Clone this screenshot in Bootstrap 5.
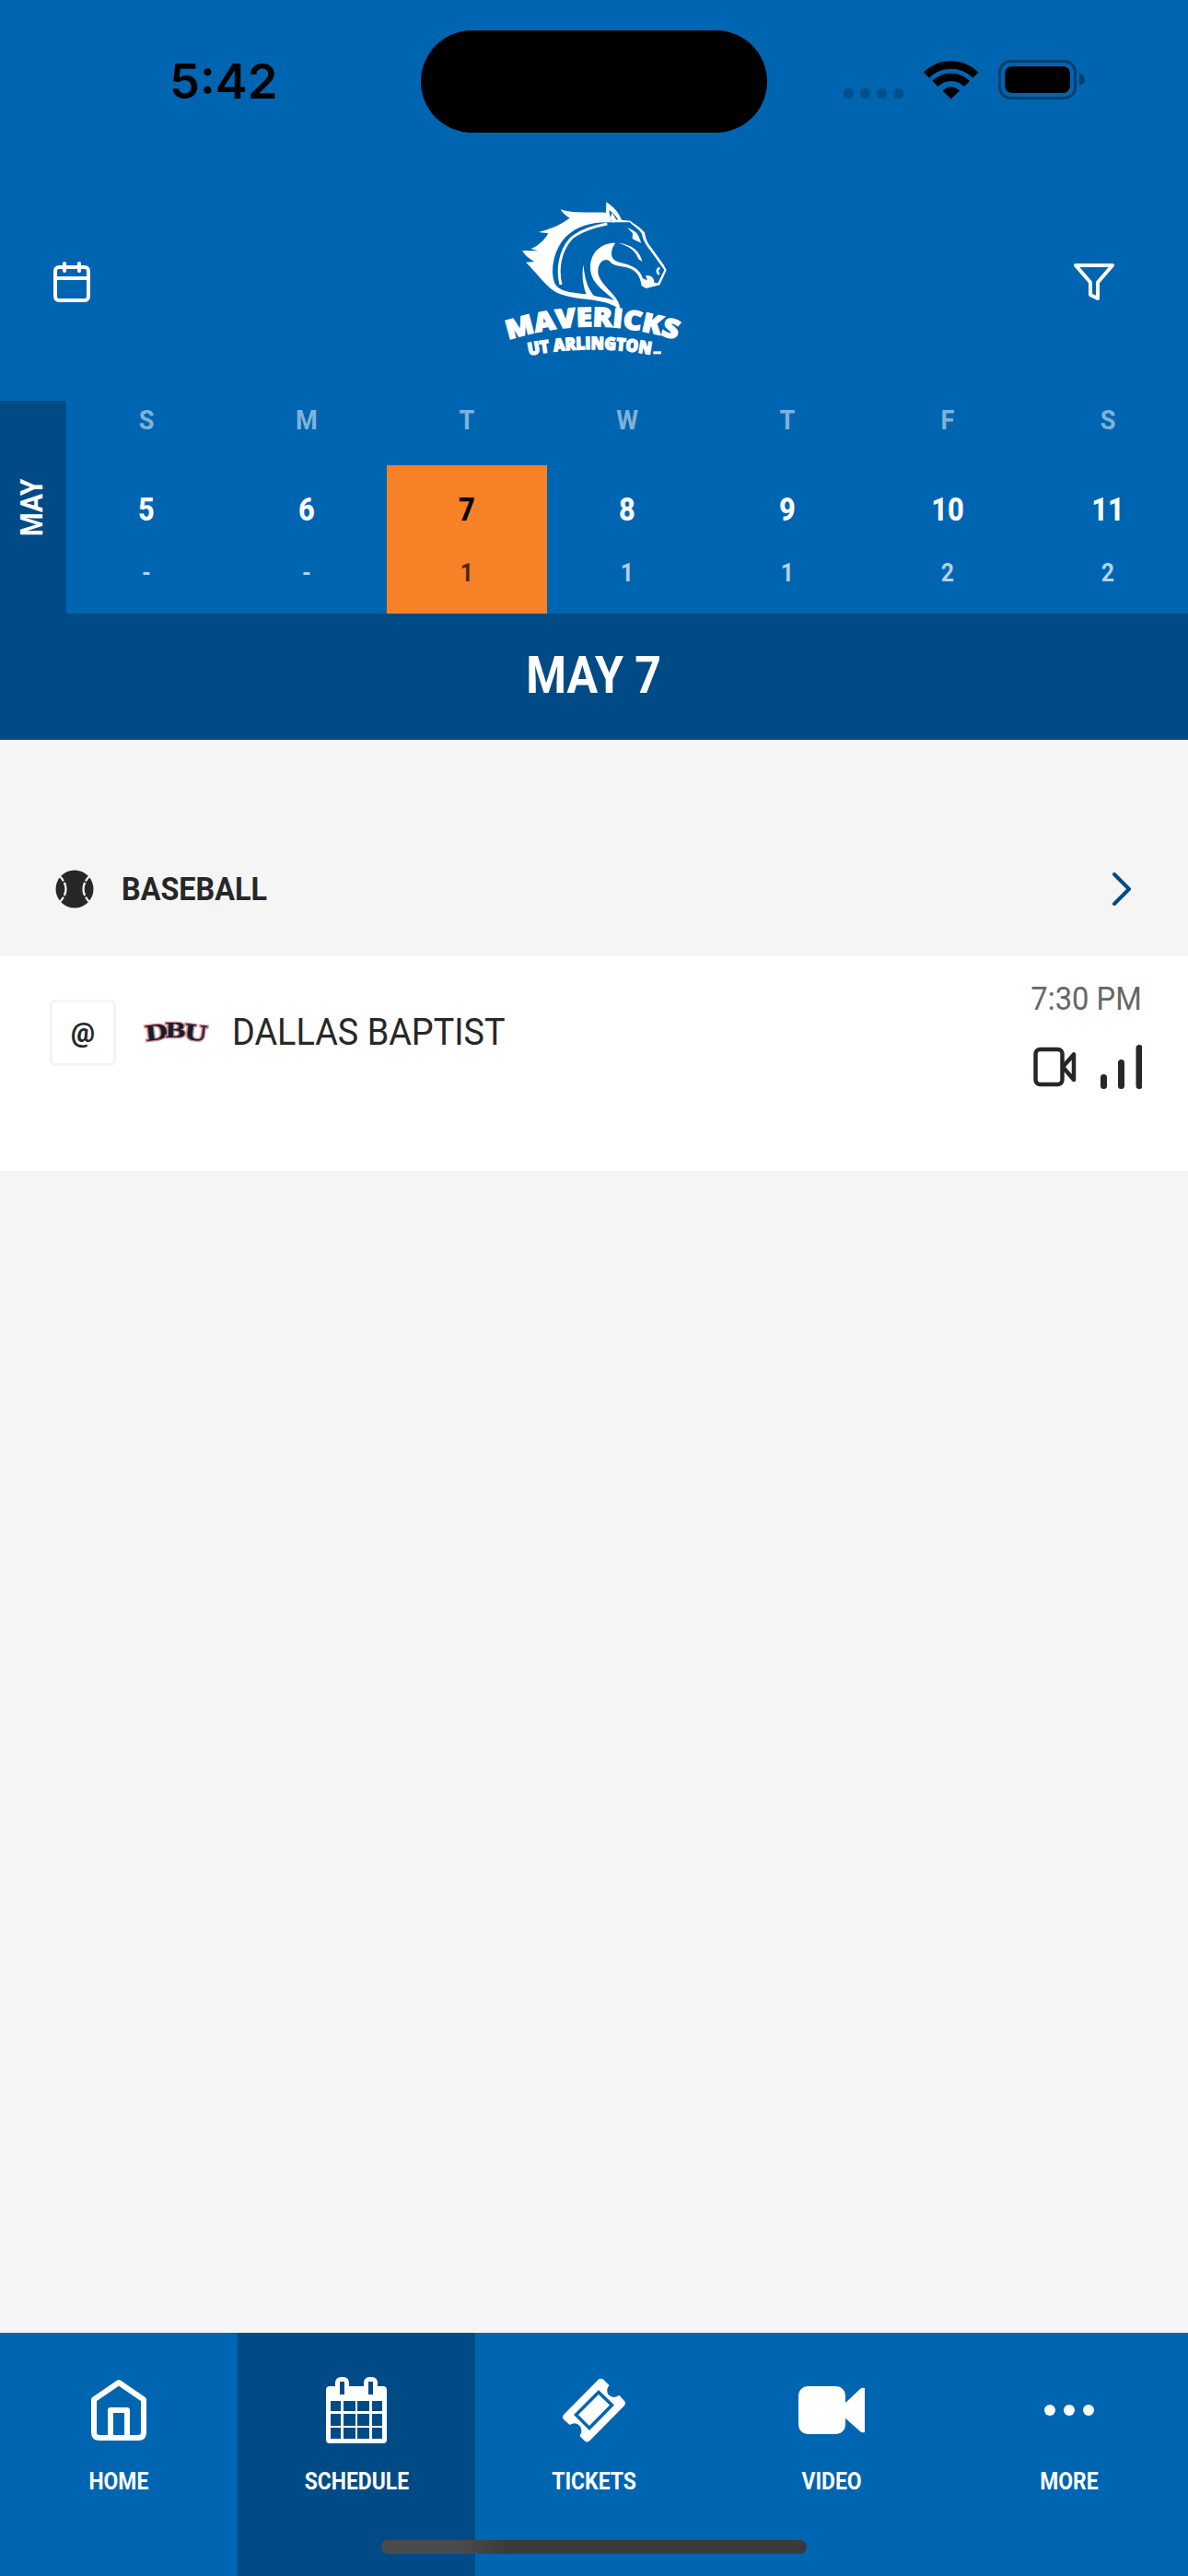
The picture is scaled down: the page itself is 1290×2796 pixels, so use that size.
<!DOCTYPE html>
<html lang="en">
<head>
    <meta charset="UTF-8">
    <meta name="viewport" content="width=device-width, initial-scale=1.0">
    <title>Mavericks Schedule</title>
    <link href="https://cdn.jsdelivr.net/npm/bootstrap@5.3.0/dist/css/bootstrap.min.css" rel="stylesheet">
    <script src="https://cdn.jsdelivr.net/npm/bootstrap@5.3.0/dist/js/bootstrap.bundle.min.js"></script>
    <style>
        :root { --uta-blue: #0065b1; --uta-navy: #004b85; --uta-orange: #f78127; --ink: #262728; }
        body { width: 1290px; height: 2796px; background: #f5f5f5; color: var(--ink); font-family: Roboto, "Liberation Sans", sans-serif; line-height: 1; overflow: hidden; }
        svg { display: block; flex: none; }
        .bg-blue { background: var(--uta-blue); }
        .bg-navy { background: var(--uta-navy); }

        .status-bar { height: 178px; padding: 33px 112px 0 184px; }
        .clock { width: 273px; font-family: Inter, sans-serif; font-size: 52.5px; font-weight: 600; padding-top: 29px; color: #000; }
        .island { width: 376px; height: 111px; }
        .status-icons { margin-top: 31px; }

        .app-header { height: 257px; padding: 22px 80px 0 58px; }
        .cal-icon { margin-top: 84px; }
        .team-logo { margin-left: 422px; }
        .filter-icon { margin-top: 86px; }

        .month-tab { width: 72px; }
        .month-tab span { writing-mode: vertical-rl; transform: rotate(180deg) scaleY(.9); margin-right: 3px; font-size: 33px; font-weight: 700; }
        .week { height: 231px; }
        .day-col { flex: 1 1 0; min-width: 0; }
        .weekday { height: 70px; padding-top: 7px; font-size: 29.5px; font-weight: 700; color: #80b2d8; transform: scaleX(.92); }
        .day-cell { height: 161px; padding-top: 31px; }
        .day-num { font-size: 35px; font-weight: 800; color: #fff; transform: scaleX(.88); }
        .day-count { font-size: 27px; font-weight: 700; color: #b3d1e8; margin-top: 38px; transform: scaleX(.92); }
        .day-cell.selected { background: var(--uta-orange); }
        .selected .day-num { color: #000; }
        .selected .day-count { color: #4a270c; }
        .date-title { height: 137px; font-size: 55px; font-weight: 700; padding-bottom: 3px; }
        .date-title span { transform: scaleX(.91); }

        .sport-head { margin-top: 90px; height: 144px; padding: 0 62px 0 60px; }
        .sport-name { font-size: 35px; font-weight: 700; margin-left: 30px; transform: scaleX(.925); transform-origin: left; }
        .game-row { height: 234px; padding: 0 50px 0 54px; }
        .at-box { width: 72px; height: 72px; margin-top: 48px; border: 3px solid #f4f4f4; border-radius: 6px; font-size: 29px; font-weight: 800; }
        .dbu { margin: 65px 0 0 24px; }
        .opponent { font-size: 41px; margin: 63px 0 0 22px; transform: scaleX(.922); transform-origin: left; }
        .game-time { font-size: 35px; color: #666; margin-top: 30px; transform: scaleX(.935); transform-origin: right; }
        .media-icons { margin-top: 32px; }

        .tab-bar { height: 264px; }
        .tab-item { width: 258px; padding-top: 48px; }
        .tab-label { font-size: 26px; font-weight: 700; margin-top: 28px; transform: scaleX(.88); }
        .home-bar { left: 414px; bottom: 24px; width: 462px; height: 15px; background: linear-gradient(90deg, #4b4b4b 18%, #3a3a3a 30%); }
    </style>
</head>
<body class="d-flex flex-column">

    <!-- Status bar -->
    <div class="status-bar bg-blue d-flex align-items-start">
        <div class="clock">5:42</div>
        <div class="island bg-black rounded-pill"></div>
        <svg class="status-icons ms-auto" width="264" height="44" viewBox="0 0 264 44">
            <g fill="#00508c">
                <rect x="2" y="32" width="11" height="11" rx="4.5"/>
                <rect x="20" y="32" width="11" height="11" rx="4.5"/>
                <rect x="38" y="32" width="11" height="11" rx="4.5"/>
                <rect x="56" y="32" width="11" height="11" rx="4.5"/>
            </g>
            <g fill="none" stroke="#000" stroke-width="8.5">
                <path d="M92 17.500 A38 38 0 0 1 145.500 17.500"/>
                <path d="M101.500 27 A24 24 0 0 1 136 27"/>
            </g>
            <path d="M109.500 34.500 Q118.700 26 128 34.500 L118.700 43.500Z"/>
            <rect x="171.500" y="2.500" width="82" height="40" rx="12" fill="none" stroke="#003f6e" stroke-width="3"/>
            <rect x="177" y="8" width="71" height="29" rx="8"/>
            <path d="M258 15 Q264 18 264 22.500 Q264 27 258 29Z" fill="#003f6e"/>
        </svg>
    </div>

    <!-- Header with team logo -->
    <div class="app-header bg-blue d-flex align-items-start">
        <svg class="cal-icon" width="40" height="44" viewBox="0 0 40 44" fill="none" stroke="#fff" stroke-width="4" stroke-linecap="round">
            <rect x="2" y="6" width="36" height="36" rx="4"/>
            <path d="M12 2V10M28 2V10M2 18H38"/>
        </svg>
        <svg class="team-logo" width="240" height="200" viewBox="0 0 720 600" fill="#fff">
            <path d="M460 412 C445 394 420 382 350 374 C290 368 255 358 232 338 C205 314 180 280 153 254 L181 252 C166 244 150 232 141 216 L193 217 L169 210 C195 201 214 180 226 160 L194 156 C225 148 260 136 296 110 C284 103 272 94 266 82 C310 96 350 90 414 92 L415 58 C440 74 455 92 465 116 L494 119 C510 133 530 143 540 157 C544 180 550 192 560 204 L601 261 L611 279 L602 300 L589 328 L545 339 L530 331 C527 305 515 280 486 272 C465 266 438 268 425 250 C412 240 388 250 388 285 C390 330 466 365 460 412Z"/>
            <!-- blue areas: neck, face and jaw -->
            <path fill="#0065b1" d="M246 320 C232 280 244 220 275 180 C310 140 360 123 424 124 L492 124 C505 138 522 145 531 162 C535 185 548 202 557 214 L604 279 L583 322 L571 320 C572 306 560 294 543 298 L549 313 L534 307 C525 275 500 265 470 257 C445 253 432 244 432 225 C433 205 440 200 445 191 C400 190 364 220 363 270 C363 320 400 340 442 378 C415 368 385 366 374 362 C350 335 345 300 340 262 C334 300 340 335 350 358 C300 352 260 350 246 320Z"/>
            <path fill="#0065b1" d="M424 85 L430 120 L453 115 Q440 94 424 85Z"/>
            <path d="M434 92 L448 116 L438 126 L427 112Z"/>
            <path fill="none" stroke="#fff" stroke-width="9" d="M267 327 C255 280 262 220 300 177 C330 150 370 138 418 129"/>
            <path d="M484 142 Q510 151 519 166 L529 191 Q512 185 500 177 L501 160Z"/>
            <path d="M454 191 Q520 198 532 252 L520 244 Q508 206 454 191Z"/>
            <path fill="none" stroke="#fff" stroke-width="8" d="M589 272 Q575 280 587 294"/>
            <g font-family="Open Sans, sans-serif" font-weight="800" stroke="#fff" stroke-width="4" text-anchor="middle">
                <path id="arc1" fill="none" stroke="none" d="M78 513 Q368 413 662 513"/>
                <path id="arc2" fill="none" stroke="none" d="M150 560 Q368 514 590 560"/>
                <text font-size="86"><textPath href="#arc1" startOffset="50%" textLength="556" lengthAdjust="spacingAndGlyphs">MAVERICKS</textPath></text>
                <text font-size="56"><textPath href="#arc2" startOffset="48%" textLength="400" lengthAdjust="spacingAndGlyphs">UT ARLINGTON</textPath></text>
            </g>
            <path d="M568 544h26v9h-26z"/>
        </svg>
        <svg class="filter-icon ms-auto" width="44" height="40" viewBox="0 0 44 40" fill="none" stroke="#fff" stroke-width="4" stroke-linejoin="round">
            <path d="M2 2H42L26 20.500V38L18 34V20.500Z"/>
        </svg>
    </div>

    <!-- Week strip -->
    <div class="week bg-blue d-flex">
        <div class="month-tab bg-navy text-white d-flex align-items-center justify-content-center"><span>MAY</span></div>
        <div class="day-col text-center">
            <div class="weekday">S</div>
            <div class="day-cell"><div class="day-num">5</div><div class="day-count">-</div></div>
        </div>
        <div class="day-col text-center">
            <div class="weekday">M</div>
            <div class="day-cell"><div class="day-num">6</div><div class="day-count">-</div></div>
        </div>
        <div class="day-col text-center">
            <div class="weekday">T</div>
            <div class="day-cell selected"><div class="day-num">7</div><div class="day-count">1</div></div>
        </div>
        <div class="day-col text-center">
            <div class="weekday">W</div>
            <div class="day-cell"><div class="day-num">8</div><div class="day-count">1</div></div>
        </div>
        <div class="day-col text-center">
            <div class="weekday">T</div>
            <div class="day-cell"><div class="day-num">9</div><div class="day-count">1</div></div>
        </div>
        <div class="day-col text-center">
            <div class="weekday">F</div>
            <div class="day-cell"><div class="day-num">10</div><div class="day-count">2</div></div>
        </div>
        <div class="day-col text-center">
            <div class="weekday">S</div>
            <div class="day-cell"><div class="day-num">11</div><div class="day-count">2</div></div>
        </div>
    </div>
    <div class="date-title bg-navy text-white d-flex align-items-center justify-content-center"><span>MAY 7</span></div>

    <!-- Games -->
    <div class="sport-head d-flex align-items-center">
        <svg width="42" height="42" viewBox="0 0 42 42">
            <circle cx="21" cy="21" r="20.500" fill="#262728"/>
            <g fill="none" stroke="#f4f4f4" stroke-width="2.200">
                <path d="M5 7Q18 21 5 35M37 7Q24 21 37 35"/>
                <path d="M8 14L13 11M8 28L13 31M34 14L29 11M34 28L29 31" stroke="#262728" stroke-width="2"/>
            </g>
        </svg>
        <div class="sport-name">BASEBALL</div>
        <svg class="ms-auto" width="20" height="36" viewBox="0 0 20 36" fill="none" stroke="#004b85" stroke-width="4" stroke-linecap="round" stroke-linejoin="round">
            <path d="M2 2L18 18L2 34"/>
        </svg>
    </div>
    <div class="game-row bg-white d-flex align-items-start">
        <div class="at-box d-flex align-items-center justify-content-center">@</div>
        <svg class="dbu" width="80" height="36" viewBox="0 0 80 36" font-family="DejaVu Serif, serif" font-weight="700" fill="#10202f" stroke="#d9898c" stroke-width="2.500" paint-order="stroke">
            <text x="7" y="27" font-size="23" textLength="25" lengthAdjust="spacingAndGlyphs" transform="rotate(-7 18 18)">D</text>
            <text x="29" y="24" font-size="22" textLength="23" lengthAdjust="spacingAndGlyphs">B</text>
            <text x="50" y="27" font-size="23" textLength="25" lengthAdjust="spacingAndGlyphs" transform="rotate(7 62 18)">U</text>
        </svg>
        <div class="opponent">DALLAS BAPTIST</div>
        <div class="ms-auto d-flex flex-column align-items-end">
            <div class="game-time">7:30 PM</div>
            <svg class="media-icons" width="118" height="48" viewBox="0 0 118 48">
                <g fill="none" stroke="#262728" stroke-width="4.500" stroke-linejoin="round">
                    <rect x="2.500" y="5" width="29" height="38" rx="5"/>
                    <path d="M32 24L44 10.500V38Z"/>
                </g>
                <path d="M76.500 35.500V44.500M95.500 19.500V44.500M115 3.500V44.500" fill="none" stroke="#262728" stroke-width="7" stroke-linecap="round"/>
            </svg>
        </div>
    </div>

    <!-- Bottom tabs -->
    <div class="tab-bar bg-blue text-white d-flex mt-auto position-relative">
        <div class="tab-item d-flex flex-column align-items-center">
            <svg width="60" height="72" viewBox="0 0 60 72" fill="none" stroke="#fff" stroke-width="6" stroke-linejoin="round">
                <path d="M3 24.500L30 6L57 24.500V60Q57 66 51 66H9Q3 66 3 60Z"/>
                <path d="M21 66V36H39V66"/>
            </svg>
            <div class="tab-label">HOME</div>
        </div>
        <div class="tab-item bg-navy d-flex flex-column align-items-center">
            <svg width="66" height="72" viewBox="0 0 66 72">
                <rect y="10" width="66" height="62" rx="4" fill="#fff"/>
                <rect x="10" width="15" height="22" rx="6" fill="#fff"/>
                <rect x="41" width="15" height="22" rx="6" fill="#fff"/>
                <path fill="#004b85" d="M15 5h5v14h-5zM46 5h5v14h-5zM5 26h11v11H5zM19 26h13v11H19zM34 26h13v11H34zM50 26h11v11H50zM5 40h11v13H5zM19 40h13v13H19zM34 40h13v13H34zM50 40h11v13H50zM5 55h11v12H5zM19 55h13v12H19zM34 55h13v12H34zM50 55h11v12H50z"/>
            </svg>
            <div class="tab-label">SCHEDULE</div>
        </div>
        <div class="tab-item d-flex flex-column align-items-center">
            <svg width="70" height="72" viewBox="90 60 70 72">
                <path fill="#fff" d="M130 62.500Q133 61 135.500 63L141.500 69Q137.500 74 140.500 79Q145.500 84.500 152.300 79.700L158 86Q160 88.500 158 91L120 129.500Q117.500 131 115.500 130L109.500 124Q113 119 110 113.500Q105 108 98.500 112L92 106Q90 104 92 101Z"/>
                <path fill="none" stroke="#0065b1" stroke-width="3.500" d="M130 76.500L144.500 90.500L120 115.500L105.500 101Z"/>
            </svg>
            <div class="tab-label">TICKETS</div>
        </div>
        <div class="tab-item d-flex flex-column align-items-center">
            <svg width="72" height="72" viewBox="0 0 72 72" fill="#fff">
                <rect y="10" width="51" height="52" rx="10"/>
                <path d="M50 29L67 13Q69 11 72 12V60Q69 61 67 59L50 44Z"/>
            </svg>
            <div class="tab-label">VIDEO</div>
        </div>
        <div class="tab-item d-flex flex-column align-items-center">
            <svg width="54" height="72" viewBox="0 0 54 72" fill="#fff">
                <circle cx="6" cy="36" r="6"/>
                <circle cx="27" cy="36" r="6"/>
                <circle cx="48" cy="36" r="6"/>
            </svg>
            <div class="tab-label">MORE</div>
        </div>
        <div class="home-bar position-absolute rounded-pill"></div>
    </div>
</body>
</html>
